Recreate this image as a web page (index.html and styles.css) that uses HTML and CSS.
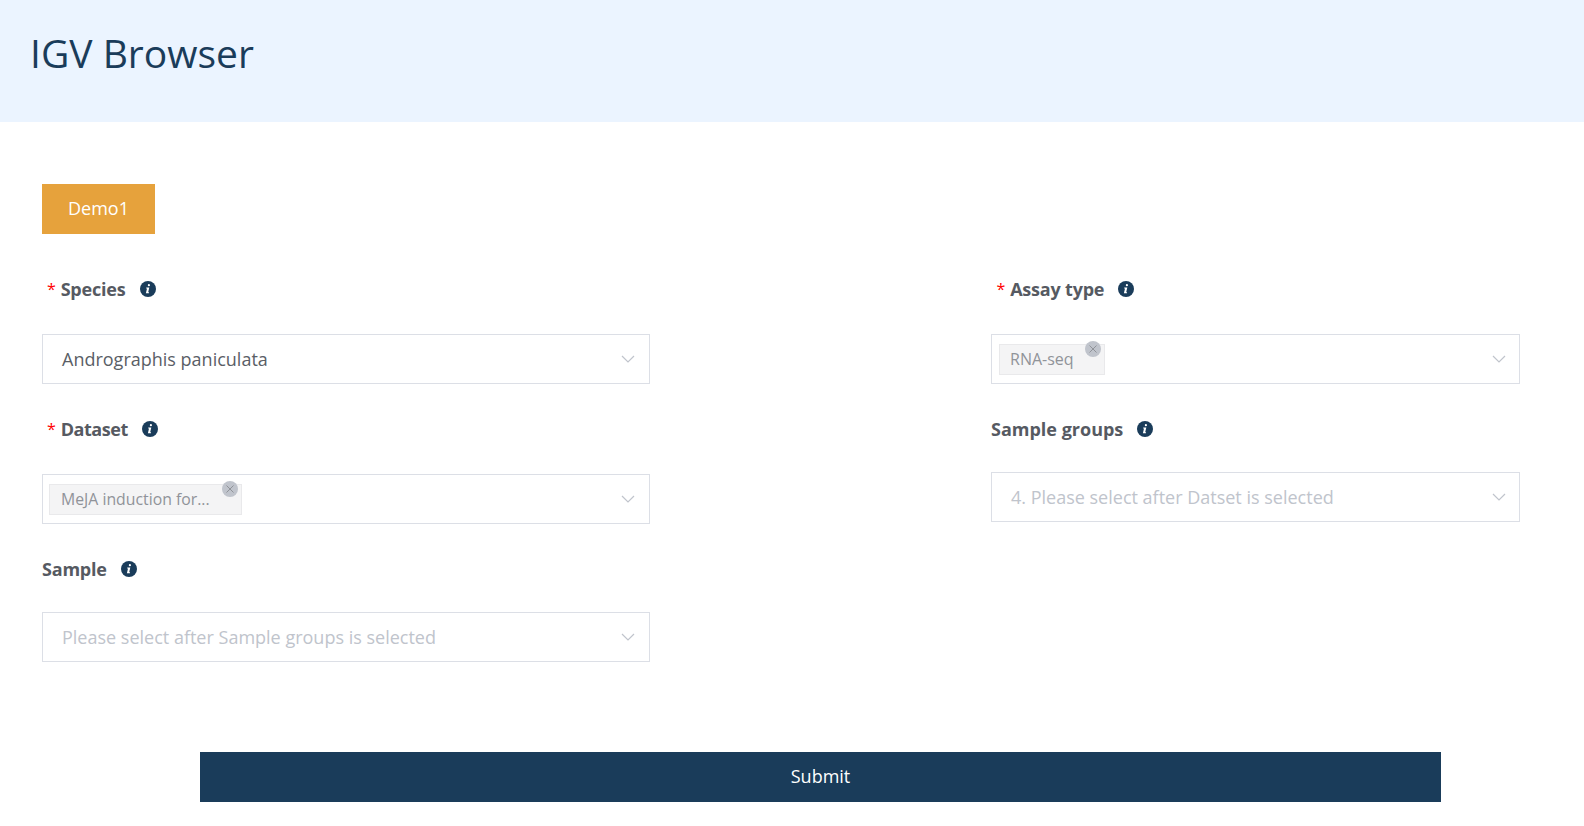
FILE: index.html
```html
<!DOCTYPE html>
<html lang="en">
<head>
<meta charset="utf-8">
<title>IGV Browser</title>
<link rel="stylesheet" href="styles.css">
</head>
<body>
<header class="header"><h1 class="title">IGV Browser</h1></header>
<main class="content">
  <button class="demo" type="button"><span class="btn-text">Demo1</span></button>
  <form class="form">
    <div class="column column-left">
      <div class="item">
        <div class="label label-first"><span class="star">*</span><span class="name">Species</span>
          <svg class="info" viewBox="0 0 16 16"><circle cx="8" cy="8" r="8"/><path class="info-i" d="M8.9 3.1a1.1 1.1 0 1 1 0 2.2 1.1 1.1 0 0 1 0-2.2zM6.3 6.6h3l-1.1 4.6h.9l-.2 1H5.9l1.1-4.6h-.9z"/></svg>
        </div>
        <div class="select"><span class="value">Andrographis paniculata</span>
          <svg class="arrow" viewBox="0 0 14 8"><path d="M1 1l6 6 6-6"/></svg></div>
      </div>
      <div class="item">
        <div class="label label-first"><span class="star">*</span><span class="name name-narrow">Dataset</span>
          <svg class="info" viewBox="0 0 16 16"><circle cx="8" cy="8" r="8"/><path class="info-i" d="M8.9 3.1a1.1 1.1 0 1 1 0 2.2 1.1 1.1 0 0 1 0-2.2zM6.3 6.6h3l-1.1 4.6h.9l-.2 1H5.9l1.1-4.6h-.9z"/></svg>
        </div>
        <div class="select select-tags select-tags-left"><span class="tag tag-wide">MeJA induction for...<span class="tag-close"><svg viewBox="0 0 10 10"><path d="M1.5 1.5l7 7M8.5 1.5l-7 7"/></svg></span></span>
          <svg class="arrow" viewBox="0 0 14 8"><path d="M1 1l6 6 6-6"/></svg></div>
      </div>
      <div class="item">
        <div class="label label-tight"><span class="name">Sample</span>
          <svg class="info" viewBox="0 0 16 16"><circle cx="8" cy="8" r="8"/><path class="info-i" d="M8.9 3.1a1.1 1.1 0 1 1 0 2.2 1.1 1.1 0 0 1 0-2.2zM6.3 6.6h3l-1.1 4.6h.9l-.2 1H5.9l1.1-4.6h-.9z"/></svg>
        </div>
        <div class="select"><span class="placeholder">Please select after Sample groups is selected</span>
          <svg class="arrow" viewBox="0 0 14 8"><path d="M1 1l6 6 6-6"/></svg></div>
      </div>
    </div>
    <div class="column column-right">
      <div class="item">
        <div class="label label-first"><span class="star">*</span><span class="name">Assay type</span>
          <svg class="info" viewBox="0 0 16 16"><circle cx="8" cy="8" r="8"/><path class="info-i" d="M8.9 3.1a1.1 1.1 0 1 1 0 2.2 1.1 1.1 0 0 1 0-2.2zM6.3 6.6h3l-1.1 4.6h.9l-.2 1H5.9l1.1-4.6h-.9z"/></svg>
        </div>
        <div class="select select-tags"><span class="tag">RNA-seq<span class="tag-close"><svg viewBox="0 0 10 10"><path d="M1.5 1.5l7 7M8.5 1.5l-7 7"/></svg></span></span>
          <svg class="arrow" viewBox="0 0 14 8"><path d="M1 1l6 6 6-6"/></svg></div>
      </div>
      <div class="item">
        <div class="label label-tight"><span class="name name-wide">Sample groups</span>
          <svg class="info" viewBox="0 0 16 16"><circle cx="8" cy="8" r="8"/><path class="info-i" d="M8.9 3.1a1.1 1.1 0 1 1 0 2.2 1.1 1.1 0 0 1 0-2.2zM6.3 6.6h3l-1.1 4.6h.9l-.2 1H5.9l1.1-4.6h-.9z"/></svg>
        </div>
        <div class="select"><span class="placeholder">4. Please select after Datset is selected</span>
          <svg class="arrow" viewBox="0 0 14 8"><path d="M1 1l6 6 6-6"/></svg></div>
      </div>
    </div>
  </form>
  <button class="submit" type="button"><span class="btn-text">Submit</span></button>
</main>
</body>
</html>
```
FILE: styles.css
```css
* { box-sizing: border-box; }
html, body { margin: 0; padding: 0; }
body {
  background: #fff;
  font-family: "Open Sans", "Noto Sans", sans-serif;
  color: #5a5e66;
  height: 826px;
  overflow: hidden;
}
.header {
  height: 122px;
  background: #ebf4ff;
  padding: 0 30px;
  display: flex;
  align-items: center;
}
.title {
  margin: 0 0 18px;
  font-size: 39px;
  font-weight: 400;
  color: #1a3c5a;
}
.content { padding: 62px 64px 0 42px; }
.btn-text { display: block; margin-bottom: 2px; }
.demo {
  display: block;
  width: 113px;
  height: 50px;
  border: 0;
  background: #e6a23c;
  color: #fff;
  font: 400 18px "Open Sans", sans-serif;
  padding: 0;
}
.form { display: flex; justify-content: space-between; margin-top: 35px; }
.column-left { width: 608px; }
.column-right { width: 529px; }
.item { margin-bottom: 25px; }
.label {
  height: 40px;
  margin-bottom: 24px;
  display: flex;
  align-items: center;
  font-size: 18px;
  font-weight: 700;
  letter-spacing: -0.2px;
  color: #565a62;
}
.label-first { margin-bottom: 25px; }
.label-tight { margin-bottom: 23px; }
.name-narrow { letter-spacing: -0.45px; }
.name-wide { letter-spacing: 0; }
.star { color: #f00; margin: 0 5px 0 5px; font-weight: 400; font-size: 16px; }
.column-right .star { margin-left: 5.5px; }
.info { width: 16px; height: 16px; margin-left: 14px; fill: #1a3c5a; }
.info-i { fill: #fff; }
.select {
  height: 50px;
  border: 1px solid #dcdfe6;
  display: flex;
  align-items: center;
  justify-content: space-between;
  padding: 0 14px 0 19px;
  font-size: 18px;
}
.column-right .select { padding-right: 13px; }
.select-tags { padding-left: 7px; }
.select-tags-left { padding-left: 6px; }
.value { color: #5a5e66; }
.placeholder { color: #c0c4cc; }
.arrow { width: 14px; height: 8px; fill: none; stroke: #c0c4cc; stroke-width: 1.2; }
.tag {
  position: relative;
  width: 106px;
  height: 31px;
  padding: 0 0 0 10px;
  display: flex;
  align-items: center;
  background: #f4f4f5;
  border: 1px solid #e9e9eb;
  color: #909399;
  font-size: 16px;
}
.tag-wide { width: 193px; padding-left: 11px; font-size: 15.8px; }
.tag-close {
  position: absolute;
  top: -4px;
  right: 3px;
  width: 16px;
  height: 16px;
  border-radius: 50%;
  background: #c0c4cc;
  display: flex;
  align-items: center;
  justify-content: center;
}
.tag-close svg { width: 10px; height: 10px; fill: none; stroke: #909399; stroke-width: 1; }
.submit {
  display: block;
  width: 1241px;
  height: 50px;
  margin: 65px 0 0 158px;
  border: 0;
  padding: 0;
  background: #1a3c5a;
  color: #fff;
  font: 400 18px "Open Sans", sans-serif;
}
```
